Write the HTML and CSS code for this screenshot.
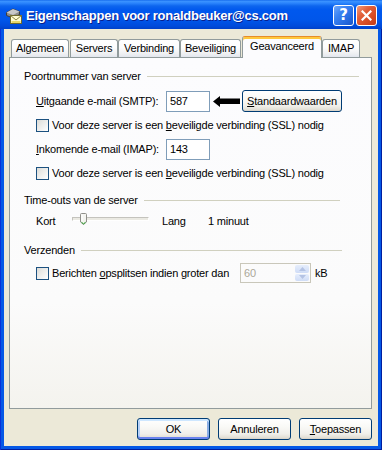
FILE: index.html
```html
<!DOCTYPE html>
<html>
<head>
<meta charset="utf-8">
<title>Eigenschappen</title>
<link rel="stylesheet" href="styles.css">
</head>
<body>
<div class="window">
  <div class="titlebar">
    <svg class="app-icon" width="17" height="17" viewBox="0 0 17 17">
      <path d="M1.5 5.5 L8 2 L14.5 4.5 L14.5 7.5 L8 11 L1.5 8.5 Z" fill="#8c8c8c" stroke="#3c3c3c" stroke-width="1"/>
      <path d="M1.5 5.5 L8 2 L14.5 4.5 L8 8 Z" fill="#c8c8c8"/>
      <rect x="5.5" y="8.5" width="11" height="8" fill="#fffbd0" stroke="#6f6a2e" stroke-width="1"/>
      <path d="M5.5 8.5 L11 13 L16.5 8.5" fill="none" stroke="#8a8440" stroke-width="1"/>
      <rect x="6.5" y="14" width="9" height="2" fill="#e8d86a"/>
    </svg>
    <span class="title">Eigenschappen voor ronaldbeuker@cs.com</span>
    <div class="tb-buttons">
      <div class="tb-btn help">?</div>
      <div class="tb-btn close">
        <svg width="11" height="11" viewBox="0 0 11 11"><path d="M1.5 1.5 L9.5 9.5 M9.5 1.5 L1.5 9.5" stroke="#fff" stroke-width="2.2" stroke-linecap="square"/></svg>
      </div>
    </div>
  </div>
  <div class="client">
    <div class="tabs">
      <div class="tab t-alg">Algemeen</div>
      <div class="tab t-srv">Servers</div>
      <div class="tab t-ver">Verbinding</div>
      <div class="tab t-bev">Beveiliging</div>
      <div class="tab active t-gea">Geavanceerd</div>
      <div class="tab t-imap">IMAP</div>
    </div>
    <div class="panel">
      <div class="group g1"><span>Poortnummer van server</span><div class="rule"></div></div>
      <div class="row port-row smtp">
        <span class="port-label"><u>U</u>itgaande e-mail (SMTP):</span>
        <div class="input">587</div>
        <svg class="arrow" width="27" height="11" viewBox="0 0 27 11"><polygon points="0,5.5 7,0 7,2.5 27,2.5 27,8 7,8 7,11" fill="#000"/></svg>
        <div class="btn std"><u>S</u>tandaardwaarden</div>
      </div>
      <div class="check-row c1"><span class="cb"></span><span class="cb-text">Voor deze server is een <u>b</u>eveiligde verbinding (SSL) nodig</span></div>
      <div class="row port-row imap">
        <span class="port-label"><u>I</u>nkomende e-mail (IMAP):</span>
        <div class="input">143</div>
      </div>
      <div class="check-row c2"><span class="cb"></span><span class="cb-text">Voor deze server is een <u>b</u>eveiligde verbinding (SSL) nodig</span></div>

      <div class="group g2"><span>Time-outs van de server</span><div class="rule"></div></div>
      <div class="slider-row">
        <span class="s-kort">Kort</span>
        <div class="track">
          <div class="channel"></div>
          <svg class="thumb" width="7" height="12" viewBox="0 0 7 12">
            <path d="M0.5 1.5 Q0.5 0.5 1.5 0.5 L5.5 0.5 Q6.5 0.5 6.5 1.5 L6.5 9 L3.5 11.5 L0.5 9 Z" fill="#f4f4f0" stroke="#8f8f8a" stroke-width="1"/>
            <path d="M1.5 9.3 L3.5 10.8 L5.5 9.3" fill="none" stroke="#21a121" stroke-width="1"/>
            <rect x="1.5" y="1.5" width="1" height="7" fill="#ffffff"/>
          </svg>
        </div>
        <span class="s-lang">Lang</span>
        <span class="s-val">1 minuut</span>
      </div>

      <div class="group g3"><span>Verzenden</span><div class="rule"></div></div>
      <div class="split-row">
        <span class="cb"></span>
        <span class="split-label">Berichten <u>o</u>psplitsen indien groter dan</span>
        <div class="spin">
          <span class="spin-val">60</span>
          <div class="spin-btns">
            <div class="spin-btn"><svg width="7" height="4" viewBox="0 0 7 4"><polygon points="0,4 3.5,0 7,4" fill="#b4c3e4"/></svg></div>
            <div class="spin-btn"><svg width="7" height="4" viewBox="0 0 7 4"><polygon points="0,0 3.5,4 7,0" fill="#b4c3e4"/></svg></div>
          </div>
        </div>
        <span class="kb">kB</span>
      </div>
    </div>
    <div class="buttons">
      <div class="btn dlg default">OK</div>
      <div class="btn dlg">Annuleren</div>
      <div class="btn dlg"><u>T</u>oepassen</div>
    </div>
  </div>
</div>
</body>
</html>
```

FILE: styles.css
```css
* { box-sizing: border-box; }
html, body { margin: 0; padding: 0; }
body {
  width: 382px;
  height: 450px;
  overflow: hidden;
  font-family: "Liberation Sans", Arial, sans-serif;
  font-size: 11px;
  line-height: 13px;
  letter-spacing: -0.2px;
  color: #000;
  background: #0055e5;
}
u { text-decoration: underline; text-underline-offset: 1px; }

.window {
  width: 382px;
  height: 450px;
  display: flex;
  flex-direction: column;
  background: #0558e6;
  box-shadow: inset 1px 0 0 #0831d9, inset -1px 0 0 #001ea0, inset 0 -1px 0 #001ea0;
}

/* Title bar */
.titlebar {
  height: 29px;
  flex-shrink: 0;
  display: flex;
  align-items: center;
  padding-left: 5px;
  padding-right: 5px;
  background: linear-gradient(to bottom, #0a5fe8 0px, #3d95ff 1px, #2c86fd 3px, #0d65ee 6px, #0058ee 10px, #0056ea 20px, #004bdb 26px, #0041c9 29px);
}
.app-icon { flex-shrink: 0; margin-top: 1px; }
.title {
  margin-left: 4px;
  font-family: "Liberation Sans", Arial, sans-serif;
  font-weight: bold;
  font-size: 13px;
  letter-spacing: -0.25px;
  color: #fff;
  text-shadow: 1px 1px 0 #0a1e8c;
  white-space: nowrap;
  flex: 1;
  margin-top: 1px;
}
.tb-buttons { display: flex; gap: 2px; margin-top: 2px; }
.tb-btn {
  width: 21px;
  height: 21px;
  border: 1px solid #fff;
  border-radius: 3px;
  display: flex;
  align-items: center;
  justify-content: center;
}
.help {
  background: linear-gradient(135deg, #6fa8fb 0%, #3a83f3 35%, #2467dd 75%, #1b56c6 100%);
  color: #fff;
  font-family: "DejaVu Sans", sans-serif;
  font-weight: bold;
  font-size: 15px;
  letter-spacing: 0;
}
.close {
  background: linear-gradient(135deg, #f39b7a 0%, #e2603a 35%, #d64a22 70%, #c23c18 100%);
}

/* Client area */
.client {
  flex: 1;
  margin: 0 4px 4px 4px;
  background: #ece9d8;
  padding: 7px 6px 6px 5px;
  display: flex;
  flex-direction: column;
}

/* Tabs */
.tabs {
  display: flex;
  align-items: flex-end;
  height: 21px;
  padding-left: 2px;
  position: relative;
  z-index: 1;
}
.tab {
  height: 18px;
  border: 1px solid #919b9c;
  border-bottom: none;
  border-radius: 3px 3px 0 0;
  background: linear-gradient(to bottom, #ffffff 0%, #fdfdfd 45%, #eff0f2 80%, #e2e6ee 100%);
  text-align: center;
  line-height: 16px;
  white-space: nowrap;
  flex-shrink: 0;
}
.t-alg { width: 58px; margin-right: 1px; }
.t-srv { width: 48px; }
.t-ver { width: 62px; }
.t-bev { width: 61px; }
.t-gea { width: 80px; margin-left: 1px; }
.t-imap { width: 38px; }
.tab.active {
  height: 22px;
  margin-bottom: -1px;
  border-top: 1px solid #e68b2c;
  background: #fcfcfe;
  box-shadow: inset 0 2px 0 #ffc83c;
  line-height: 16px;
  padding-top: 1px;
}

/* Panel */
.panel {
  height: 352px;
  flex-shrink: 0;
  border: 1px solid #919b9c;
  background: linear-gradient(to bottom, #fcfcfe 0%, #fbfbfb 70%, #f4f3ee 100%);
  padding: 12px 0 0 14px;
  display: flex;
  flex-direction: column;
}

.group {
  display: flex;
  align-items: center;
  height: 13px;
  white-space: nowrap;
}
.group .rule {
  flex: 1;
  height: 1px;
  background: #d0d0bf;
  margin-left: 6px;
}
.g1 .rule { margin-right: 12px; }
.g2 { margin-top: 14px; }
.g2 .rule { margin-right: 31px; }
.g3 { margin-top: 15px; }
.g3 .rule { margin-right: 29px; }

.row {
  display: flex;
  align-items: center;
  padding-left: 12px;
  white-space: nowrap;
}
.port-row.smtp { height: 22px; margin-top: 7px; }
.port-row.imap { height: 21px; margin-top: 7px; }
.port-label { width: 130px; flex-shrink: 0; }
.input {
  width: 44px;
  height: 21px;
  border: 1px solid #7f9db9;
  background: #fff;
  padding-left: 3px;
  line-height: 19px;
  flex-shrink: 0;
}
.arrow { margin-left: 3px; flex-shrink: 0; }
.btn {
  border: 1px solid #003c74;
  border-radius: 3px;
  background: linear-gradient(to bottom, #ffffff 0%, #f9f9f6 40%, #f0efea 75%, #e3e0d6 92%, #d6d0c5 100%);
  text-align: center;
  white-space: nowrap;
}
.std {
  margin-left: 2px;
  width: 100px;
  height: 22px;
  line-height: 20px;
}

.check-row {
  display: flex;
  align-items: center;
  height: 13px;
  padding-left: 12px;
  margin-top: 7px;
  white-space: nowrap;
}
.cb {
  width: 13px;
  height: 13px;
  border: 1px solid #1c5180;
  background: linear-gradient(135deg, #dcdcd7 0%, #ececea 45%, #ffffff 100%);
  flex-shrink: 0;
}
.cb-text { margin-left: 3px; }

/* Slider */
.slider-row {
  display: flex;
  align-items: flex-start;
  height: 16px;
  margin-top: 6px;
  padding-left: 12px;
  white-space: nowrap;
}
.s-kort { width: 36px; margin-top: 2px; }
.track {
  width: 77px;
  height: 16px;
  position: relative;
}
.channel {
  margin-top: 4px;
  height: 4px;
  border: 1px solid #c4c3bd;
  border-right-color: #fff;
  border-bottom-color: #fff;
  background: #ebeae3;
}
.thumb {
  position: absolute;
  left: 8px;
  top: 0;
}
.s-lang { margin-left: 13px; width: 46px; margin-top: 2px; }
.s-val { margin-top: 2px; }

/* Split row */
.split-row {
  display: flex;
  align-items: center;
  height: 20px;
  margin-top: 6px;
  padding-left: 12px;
  white-space: nowrap;
}
.split-label { width: 188px; margin-left: 3px; flex-shrink: 0; }
.spin {
  width: 71px;
  height: 20px;
  border: 1px solid #c9c7ba;
  display: flex;
  align-items: stretch;
  flex-shrink: 0;
}
.spin-val {
  flex: 1;
  color: #aca899;
  padding-left: 3px;
  line-height: 18px;
}
.spin-btns {
  width: 14px;
  margin: 1px 1px 1px 0;
  display: flex;
  flex-direction: column;
  gap: 1px;
}
.spin-btn {
  flex: 1;
  background: linear-gradient(to bottom, #e6eefc, #cfdcf6);
  border-radius: 2px;
  display: flex;
  align-items: center;
  justify-content: center;
}
.kb { margin-left: 4px; }

/* Dialog buttons */
.buttons {
  display: flex;
  justify-content: flex-end;
  gap: 8px;
  margin-top: 9px;
  height: 22px;
}
.dlg {
  width: 73px;
  height: 22px;
  line-height: 20px;
}
.default {
  box-shadow: inset 0 2px 0 #cee7ff, inset 0 -2px 0 #6982ee, inset 2px 0 0 #b8d2f8, inset -2px 0 0 #89ade4;
}
```
